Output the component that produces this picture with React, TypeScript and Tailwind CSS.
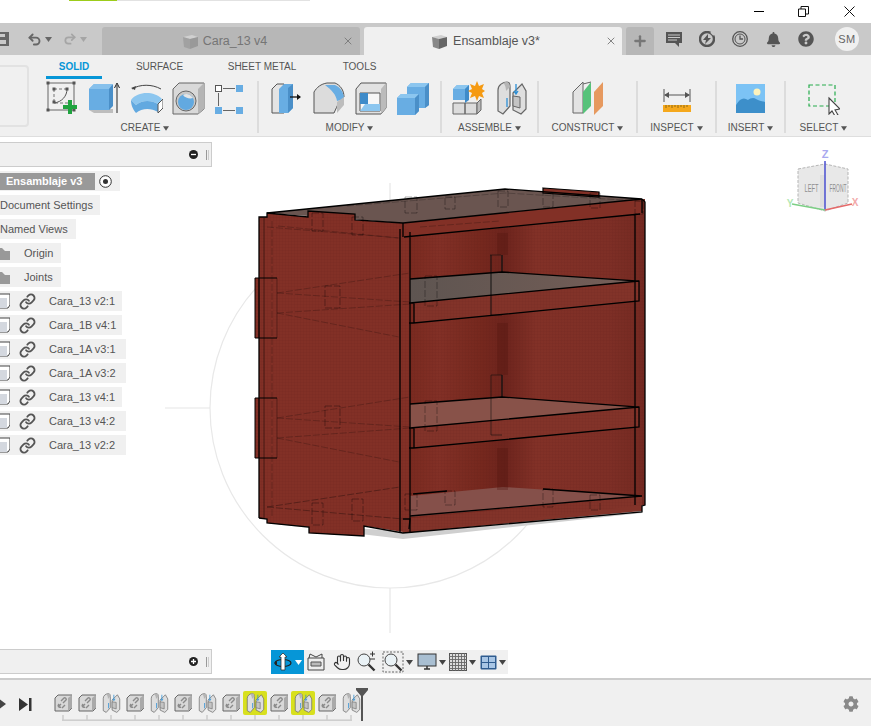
import React from "react";
import { Hand, Link as LinkIcon, Undo2, Redo2, X, Plus } from "lucide-react";
import { FaBell, FaQuestionCircle, FaCog } from "react-icons/fa";

const Tri = ({ c = "#555", w = 7 }: { c?: string; w?: number }) => (
  <svg width={w} height={5} viewBox="0 0 7 5" className="shrink-0"><path d="M0 0h7L3.5 5z" fill={c} /></svg>
);

const CubeDoc = ({ c = "#777" }: { c?: string }) => (
  <svg width="17" height="16" viewBox="0 0 17 16" className="shrink-0">
    <path d="M1 3 10 1l6 2-8 2z" fill="#d0d0d0" />
    <path d="M1 3l7 2v10l-6-2z" fill={c} opacity="0.75" />
    <path d="M8 5l8-2v9l-8 3z" fill={c} />
  </svg>
);

/* ---------- ribbon icons ---------- */
const I = ({ w = 33, children }: { w?: number; children: React.ReactNode }) => (
  <svg width={w} height={34} viewBox={`0 0 ${w} 34`} className="shrink-0">{children}</svg>
);

const SketchIcon = () => (
  <I>
    <path d="M2 2h26v27H2z" fill="none" stroke="#666" strokeWidth="1" />
    <path d="M8 8h14M8 8v14h14" fill="none" stroke="#777" strokeDasharray="3 2" />
    <path d="M8 22C16 21 21 15 21 8" fill="none" stroke="#555" />
    {[[2, 2], [28, 2], [2, 29], [28, 29], [8, 8], [21, 8], [8, 21]].map(([x, y], i) => (
      <rect key={i} x={x - 1.5} y={y - 1.5} width="3" height="3" fill="#555" />
    ))}
    <path d="M22 19h4v5h5v4h-5v5h-4v-5h-5v-4h5z" fill="#1fa33f" />
  </I>
);
const ExtrudeIcon = () => (
  <I>
    <path d="M1 29l5 3h19v-4H1z" fill="#bdbdbd" />
    <path d="M1 8l5-5h18v22l-3 4H1z" fill="#68ade3" />
    <path d="M1 8h20l4-5H6z" fill="#87c1ec" />
    <path d="M21 8l4-5v22l-4 4z" fill="#4a8fc8" />
    <path d="M29 32V4m-2.500 3L29 2l2.500 5" stroke="#222" fill="none" strokeWidth="1" />
  </I>
);
const RevolveIcon = () => (
  <I>
    <path d="M2 8C10 3 22 3 31 8" stroke="#444" fill="none" />
    <path d="M1 7l5-2-1 4z" fill="#444" />
    <path d="M1 19C8 10 24 10 32 18l-4 5C21 19 12 19 6 24z" fill="#8cc6ef" />
    <path d="M1 19c0 4 1 8 5 13 6-5 15-5 22-1V23C21 19 12 19 6 24z" fill="#62a9e0" />
    <path d="M28 23l5-5v9l-5 5z" fill="#fff" stroke="#555" />
  </I>
);
const HoleIcon = () => (
  <I>
    <path d="M1 8l6-6h25v26l-6 5H1z" fill="#d9d9d9" stroke="#666" />
    <path d="M26 8l6-6v26l-6 5z" fill="#b5b5b5" />
    <circle cx="14" cy="20" r="10" fill="#c8c8c8" stroke="#666" />
    <circle cx="14" cy="21" r="8" fill="#62a9e0" />
    <path d="M11 14c3-2 7-1 10 3-3 1-8 0-10-3z" fill="#e5e5e5" />
  </I>
);
const PatternIcon = () => (
  <I w={30}>
    <rect x="1.500" y="4.500" width="6" height="6" fill="#fff" stroke="#555" />
    <rect x="22" y="4" width="7" height="7" fill="#68ade3" />
    <rect x="1" y="26" width="7" height="7" fill="#68ade3" />
    <rect x="22" y="26" width="7" height="7" fill="#68ade3" />
    <path d="M9 7.500h12M9 29.500h12M4.500 12v13" stroke="#666" />
  </I>
);
const PressPullIcon = () => (
  <I w={32}>
    <path d="M1 8l5-5h7v29H1z" fill="#e4e4e4" stroke="#555" />
    <path d="M8 8l5-5h9v24l-5 5H8z" fill="#68ade3" />
    <path d="M17 7l5-4v24l-5 5z" fill="#4a8fc8" />
    <path d="M19 16h10" stroke="#111" strokeWidth="1.300" />
    <path d="M26 13l4 3-4 3z" fill="#111" />
  </I>
);
const FilletIcon = () => (
  <I w={32}>
    <path d="M1 11C4 6 8 3 14 2h8c5 2 9 7 9 14l-5 5c-2 4-3 7-5 11H1z" fill="#dcdcdc" stroke="#555" />
    <path d="M12 4h10c5 2 9 7 9 14l-7 2C23 14 19 9 12 4z" fill="#68ade3" />
    <path d="M24 21l7-5v8l-7 8z" fill="#bdbdbd" />
  </I>
);
const ShellIcon = () => (
  <I w={32}>
    <path d="M1 8l5-6h25v25l-5 6H1z" fill="#e2e2e2" stroke="#555" />
    <path d="M26 8l5-6v25l-5 6z" fill="#bbb" />
    <path d="M5 12h20v18H5z" fill="#f7f7f7" stroke="#555" />
    <path d="M5 12h8v11H5z" fill="#3e8bc9" />
    <path d="M5 30l5-7h15v7z" fill="#8cc6ef" />
  </I>
);
const CombineIcon = () => (
  <I w={32}>
    <path d="M10 6l4-4h18v22l-4 3H10z" fill="#68ade3" />
    <path d="M10 6h18l4-4H14z" fill="#8cc6ef" />
    <path d="M28 6l4-4v22l-4 3z" fill="#4a8fc8" />
    <path d="M0 17l4-4h18v17l-4 4H0z" fill="#68ade3" />
    <path d="M0 17h18l4-4H4z" fill="#8cc6ef" />
    <path d="M18 17l4-4v17l-4 4z" fill="#4a8fc8" />
  </I>
);
const NewComponentIcon = () => (
  <I>
    <path d="M1 22h12v11H1zM13 22h12v11H13z" fill="#dcdcdc" stroke="#666" />
    <path d="M25 22l4-4v11l-4 4z" fill="#bbb" stroke="#666" />
    <path d="M1 8l4-4h12v15H1z" fill="#68ade3" />
    <path d="M1 8h12l4-4H5z" fill="#8cc6ef" />
    <path d="M13 8l4-4v15l-4 3z" fill="#3e8bc9" />
    <path d="M25 0l2 5 5-2-2 5 3 2-3 2 2 5-5-2-2 5-2-5-5 2 2-5-4-2 4-2-2-5 5 2z" fill="#f59a12" />
  </I>
);
const JointIcon = ({ w = 30, h = 34 }: { w?: number; h?: number }) => (
  <svg width={w} height={h} viewBox="0 0 30 34" className="shrink-0">
    <path d="M1 9C1 4 6 1 10 1c2 0 3 2 3 5v19l-7 8-5-3z" fill="#dedede" stroke="#666" strokeWidth="1.200" />
    <path d="M9 1c3 0 4 3 4 5l-4 4C9 7 8 3 6 2z" fill="#b5b5b5" />
    <path d="M16 12l9-9 4 7v18l-5 5-8-4z" fill="#dedede" stroke="#666" strokeWidth="1.200" />
    <path d="M16 15l7 1v11l-7-2z" fill="#c4c4c4" stroke="#666" />
    <path d="M19 3v9m-2-2 2 3 2-3M10 17v9" stroke="#2b8fd6" strokeWidth="1.300" fill="none" />
  </svg>
);
const ConstructIcon = () => (
  <I w={32}>
    <path d="M1 11L11 1v31H1z" fill="#e3e3e3" stroke="#666" />
    <path d="M11 11l8-10v24l-8 8z" fill="#57c27a" />
    <path d="M11 3l8-2" stroke="#666" />
    <path d="M22 11l9-10v24l-9 9z" fill="#e6995f" />
  </I>
);
const InspectIcon = () => (
  <I w={28}>
    <path d="M1 8v13M27 8v13M2 14h24" stroke="#555" fill="none" />
    <path d="M1 14l5-3v6zM27 14l-5-3v6z" fill="#555" />
    <rect y="24" width="28" height="7" fill="#f5a81c" />
    <path d="M3 24v3M6 24v2M9 24v3M12 24v2M15 24v3M18 24v2M21 24v3M24 24v2" stroke="#7a5a10" strokeWidth=".8" />
  </I>
);
const InsertIcon = () => (
  <I w={29}>
    <rect width="29" height="29" y="3" fill="#7cc3f5" />
    <circle cx="21" cy="11" r="3.500" fill="#fdf3bd" />
    <path d="M0 24c4-7 8-8 12-5 2-2 6-3 8-1 3 2 6 2 9 3v11H0z" fill="#3d8fca" />
  </I>
);
const SelectIcon = () => (
  <I w={32}>
    <path d="M1 4h26v21H1z" fill="none" stroke="#26ac4d" strokeWidth="1.200" strokeDasharray="4 2.500" />
    <path d="M21 17l11 11-5 1 3 5-3 1-3-5-3 3z" fill="#fff" stroke="#444" strokeWidth="1.100" />
  </I>
);

/* ---------- ribbon ---------- */
const Group = ({ w, label, gap = "", children, last }: { w: string; label: string; gap?: string; children: React.ReactNode; last?: boolean }) => (
  <div className={`${w} shrink-0 flex flex-col items-center h-[52px] ${last ? "" : "border-r-2 border-[#dcdcdc]"}`}>
    <div className={`flex h-[34px] ${gap}`}>{children}</div>
    <div className="mt-[6px] flex items-center gap-[3px] text-[10px] leading-[14px] text-[#555]">
      {label} <Tri w={6} />
    </div>
  </div>
);

/* ---------- model ---------- */
const B = "#000";
const Dash = ({ d, o = 0.3 }: { d: string; o?: number }) => (
  <path d={d} fill="none" stroke="#000" strokeWidth=".7" strokeDasharray="7 2" opacity={o} />
);
const SIDE = "M259 216h8v-4l41 4v-6l47 3v6l48 3 7 9V532l-46-7v10l-55-3v-6l-42-4v-4l-8-1z";
const Model = () => (
  <svg className="absolute inset-0" width="871" height="542" viewBox="0 136 871 542">
    <defs>
      <pattern id="mesh" width="3" height="3" patternUnits="userSpaceOnUse">
        <path d="M0 0H3M0 0V3" stroke="#3f100a" strokeWidth=".5" opacity=".22" />
      </pattern>
      <linearGradient id="wall" x1="0" x2="1" y1="0" y2="0">
        <stop offset="0" stopColor="#78281e" />
        <stop offset=".15" stopColor="#823026" />
        <stop offset=".32" stopColor="#76281e" />
        <stop offset=".42" stopColor="#6d241d" />
        <stop offset=".55" stopColor="#823127" />
        <stop offset=".85" stopColor="#7e2f26" />
        <stop offset="1" stopColor="#742921" />
      </linearGradient>
      <linearGradient id="sh1" x1="0" x2="1" y1="0" y2="0">
        <stop offset="0" stopColor="#5e5551" />
        <stop offset=".6" stopColor="#6c5a54" />
        <stop offset="1" stopColor="#77605a" />
      </linearGradient>
    </defs>
    {/* work plane */}
    <circle cx="390" cy="407" r="180" fill="none" stroke="#e8e8e8" strokeWidth="1.200" />
    <path d="M165 407h45M390 587v45M390 182v45" stroke="#e6e6e6" strokeWidth="1.200" />
    {/* shadow */}
    <path d="M267 522l136 16 239-26v-8L403 530z" fill="#cfcfcf" />
    {/* walls */}
    <path d="M403 222L645 198V504L403 532z" fill="url(#wall)" />
    <path d="M267 212L505 188L642 198L403 222z" fill="#6a5550" />
    <path d={SIDE} fill="#823026" />
    <path d="M255 277h22v60h-22zM255 397h22v60h-22z" fill="#823026" />
    <path d="M404 222L642 198V213L404 236z" fill="#823026" />
    <path d="M543 187l56 4v5l-56-4z" fill="#823026" stroke={B} strokeWidth="1.200" />
    <path d="M414 302L639 280V300L414 322z" fill="#823329" />
    <path d="M414 427L639 406V426L414 447z" fill="#823329" />
    <path d="M403 532l-1-14 240-23v15z" fill="#823329" />
    {/* mesh */}
    <path d={`M403 236L645 212V504L403 532z${SIDE}M255 277h22v60h-22zM255 397h22v60h-22z`} fill="url(#mesh)" />
    {/* shelves */}
    <path d="M410 278L502 271L639 280L410 302z" fill="url(#sh1)" />
    <path d="M410 403L502 396L639 406L410 427z" fill="#885249" />
    <path d="M410 495L503 486L642 495L410 516z" fill="#85504a" />
    {/* centre slot */}
    <path d="M497 232h11v22h-11zM497 322h11v52h-11zM497 447h11v42h-11z" fill="#4f130c" opacity=".3" />
    <path d="M490 254h11M491 254v60h11M491 374h11M491 374v60h11M491 314v-60" stroke="#111" fill="none" strokeWidth=".7" opacity=".8" />
    <path d="M502 254v17M502 374v22" stroke="#111" strokeWidth="1.300" />
    {/* heavy edges */}
    <g fill="none" stroke={B} strokeWidth="1.300">
      <path d="M259 517V216h8v-4l41 4v-6l47 3v6l48 3" />
      <path d="M642 198l3 3V504L642 505v6L403 532l-39-7v10l-55-3v-6l-42-4v-4l-8-1" />
      <path d="M267 212L505 188L642 198L403 222" />
      <path d="M400 228V532M410 231V531M404 236L640 213M635 213V504" />
      <path d="M403 222v14M642 198v14" />
      <path d="M410 302L639 280M410 278L502 271L639 280V300L414 322V302h-5M414 322h-5" />
      <path d="M410 427L639 406M410 403L502 396L639 406V426L414 447V427h-5M414 447h-5" />
      <path d="M410 515L642 495M413 493L447 490M543 488L642 495" />
      <path d="M403 518h7l-1 10" />
      <path d="M277 277h-22v60h22M277 397h-22v60h22" strokeWidth="1" />
    </g>
    {/* hidden edges */}
    <path d="M264 217V518" stroke="#000" strokeWidth=".8" opacity=".55" />
    <path d="M277 277v60M277 397v60" stroke="#000" strokeWidth=".6" opacity=".5" />
    <Dash d="M272 220V516M278 225l120 12" />
    <Dash d="M277 292l133-20M277 312l133-9M277 312l122 24M277 292l133 9" />
    <Dash d="M277 417l133-21M277 437l133-10M277 437l122 24M277 417l133 9" />
    <Dash d="M325 285h15v22h-15zM325 405h15v22h-15zM425 275h12v30h-12zM425 400h12v30h-12z" o={0.45} />
    <Dash d="M267 506l133-20M267 506l136 12M312 502h11v22h-11zM352 498h11v22h-11zM405 493h12v16h-12zM445 490h10v14h-10zM543 488h10v18h-10zM590 494h10v15h-10z" o={0.45} />
    <Dash d="M312 212h11v18h-11zM352 216h11v18h-11zM405 196h12v16h-12zM445 196h10v12h-10zM498 190h10v16h-10zM543 192h10v14h-10zM590 192h10v15h-10zM635 200h8v13h-8z" o={0.45} />
    <Dash d="M267 226L400 237M347 205L505 192L640 200M420 226l80-6" o={0.3} />
    {/* view cube */}
    <path d="M798 168L825 163L848 168V202L825 210L798 202z" fill="#e8e8e8" stroke="#b5b5b5" strokeDasharray="3 1.500" />
    <rect x="820" y="174" width="5" height="32" fill="#dedede" />
    <text x="811.500" y="191" textAnchor="middle" fontSize="10" fill="#8e8e8e" fontFamily="'Liberation Sans',sans-serif" textLength="14" lengthAdjust="spacingAndGlyphs">LEFT</text>
    <text x="838" y="191" textAnchor="middle" fontSize="10" fill="#8e8e8e" fontFamily="'Liberation Sans',sans-serif" textLength="17" lengthAdjust="spacingAndGlyphs">FRONT</text>
    <path d="M825 160V209" stroke="#4a4fd0" strokeWidth="1.500" />
    <path d="M825 209L792 203" stroke="#7ccf85" strokeWidth="1.500" />
    <path d="M825 209L852 203" stroke="#e56a6a" strokeWidth="1.500" />
    <text x="825" y="157" textAnchor="middle" fontSize="11" fontWeight="bold" fill="#a9a9ef" fontFamily="'Liberation Sans',sans-serif">Z</text>
    <text x="790" y="206" textAnchor="middle" fontSize="10" fontWeight="bold" fill="#b3e8b3" fontFamily="'Liberation Sans',sans-serif">Y</text>
    <text x="855" y="205" textAnchor="middle" fontSize="10" fontWeight="bold" fill="#f2aaaa" fontFamily="'Liberation Sans',sans-serif">X</text>
  </svg>
);

/* ---------- browser tree ---------- */
const Row = ({ w, children }: { w: string; children: React.ReactNode }) => (
  <div className={`${w} h-5 flex items-center bg-[#f0f0f0] text-[11px] text-[#555] whitespace-nowrap overflow-hidden`}>{children}</div>
);
const Folder = () => (
  <svg width="10" height="14" viewBox="0 0 10 14" className="shrink-0"><path d="M-4 2h6l3 3h5v9H-4z" fill="#999" /></svg>
);
const Comp = ({ name, w }: { name: string; w: string }) => (
  <Row w={w}>
    <svg width="10" height="16" viewBox="0 0 10 16" className="shrink-0">
      <path d="M-3 1h13v11l-2 3H-3z" fill="#fff" stroke="#444" />
      <path d="M-3 5h10v10H-3z" fill="#d4d8df" />
    </svg>
    <LinkIcon size={17} strokeWidth={2.600} color="#555" className="ml-[9px] shrink-0" />
    <span className="ml-[13px]">{name}</span>
  </Row>
);
const Grip = () => (
  <div className="flex gap-px ml-[8px]"><div className="w-px h-[10px] bg-[#999]" /><div className="w-px h-[10px] bg-[#ccc]" /></div>
);
const PanelBar = ({ plus }: { plus?: boolean }) => (
  <div className="w-[212px] h-[25px] bg-[#f0f0f0] border border-l-0 border-[#ccc] flex items-center justify-end pr-[2px]">
    <svg width="9" height="9" viewBox="0 0 9 9" className="shrink-0">
      <circle cx="4.500" cy="4.500" r="4.500" fill="#222" />
      <path d={plus ? "M2 4.500h5M4.500 2v5" : "M2 4.500h5"} stroke="#fff" strokeWidth="1.300" />
    </svg>
    <Grip />
  </div>
);

/* ---------- nav ---------- */
const Orbit = () => (
  <svg width="20" height="20" viewBox="0 0 20 20" className="shrink-0">
    <ellipse cx="10" cy="11" rx="8" ry="3.500" fill="none" stroke="#222" strokeWidth="1.200" />
    <path d="M1 11l3-2v4z" fill="#222" />
    <path d="M8 18V5H6l4-4 4 4h-2v13z" fill="#fff" stroke="#333" strokeWidth=".8" />
  </svg>
);
const LookAt = () => (
  <svg width="20" height="20" viewBox="0 0 20 20" className="shrink-0">
    <path d="M2 6h16v12H2z" fill="#eee" stroke="#444" />
    <path d="M5 10h10v4H5z" fill="#bbb" stroke="#555" />
    <path d="M3 6l1-4 6 3 6-3v4" fill="none" stroke="#444" />
  </svg>
);
const Magnify = ({ dashed, pm }: { dashed?: boolean; pm?: boolean }) => (
  <svg width="22" height="22" viewBox="0 0 22 22" className="shrink-0">
    {dashed && <rect x="1" y="1" width="20" height="20" fill="none" stroke="#666" strokeDasharray="2 1.500" />}
    <circle cx="9" cy="9" r="6" fill="#eaf2f6" stroke="#444" />
    <path d="M13.500 13.500l6 6" stroke="#333" strokeWidth="2.400" />
    {pm && <path d="M15 3h5M17.500 .5v5M15 8h5" stroke="#333" strokeWidth="1" />}
  </svg>
);
const Display = () => (
  <svg width="20" height="20" viewBox="0 0 20 20" className="shrink-0">
    <rect x="1" y="2" width="18" height="12" fill="#a9bfd2" stroke="#333" />
    <path d="M7 17h6M10 14v3" stroke="#333" strokeWidth="1.500" />
  </svg>
);
const Grid = () => (
  <svg width="18" height="18" viewBox="0 0 18 18" className="shrink-0">
    <rect x=".5" y=".5" width="17" height="17" fill="#ddd" stroke="#555" />
    <path d="M3.500 0v18M6.500 0v18M9.500 0v18M12.500 0v18M15.500 0v18M0 3.500h18M0 6.500h18M0 9.500h18M0 12.500h18M0 15.500h18" stroke="#666" strokeWidth=".9" />
  </svg>
);
const Views = () => (
  <svg width="17" height="15" viewBox="0 0 17 15" className="shrink-0">
    <rect x=".5" y=".5" width="16" height="14" rx="1" fill="#2f5c8f" />
    <path d="M2 2h6v5H2zM9 2h6v5H9zM2 8h6v5H2zM9 8h6v5H9z" fill="#a9c6e5" />
  </svg>
);

/* ---------- timeline ---------- */
const LinkFeature = () => (
  <svg width="18" height="18" viewBox="0 0 18 18">
    <path d="M1 4l3-3h14v13l-3 3H1z" fill="#d8d8d8" stroke="#666" />
    <path d="M14 4l4-3v13l-4 3z" fill="#aaa" />
    <path d="M4 13l3-3M7 7l3-3c1-1 3 1 2 2l-3 3M8 14l3-3M5 10c-2 2 0 4 2 3" fill="none" stroke="#8a8a8a" strokeWidth="1.400" />
  </svg>
);
const features = ["l", "l", "j", "l", "j", "l", "j", "l", "h", "l", "h", "l", "j"];
const tlBg: Record<string, string> = { h: "bg-[#d8e01e] rounded-[2px]" };
const Feature = ({ t, i }: { t: string; i: number }) => (
  <div className="w-6 shrink-0 flex flex-col items-center">
    <div className={`w-6 h-6 flex items-center justify-center ${tlBg[t] || ""}`}>
      {t === "l" ? <LinkFeature /> : <JointIcon w={19} h={20} />}
    </div>
    <svg width="24" height="6" viewBox="0 0 24 6" className="block">
      <path d="M12 0v5" stroke="#ccc" strokeWidth="1.500" />
      <path d={i === 0 ? "M11 5.200h13" : i === features.length - 1 ? "M0 5.200h13" : "M0 5.200h24"} stroke="#ccc" strokeWidth="1.500" />
    </svg>
  </div>
);

export default function App() {
  return (
    <div className="w-[871px] h-[726px] overflow-hidden bg-white flex flex-col font-['Liberation_Sans',Arial,sans-serif]">
      {/* window title bar */}
      <div className="h-[23px] shrink-0 relative flex justify-end items-center pr-[16px] gap-[30px]">
        <div className="absolute left-[69px] top-0 h-px w-[241px] bg-[#e2e2e2]"><div className="w-[48px] h-px bg-[#9ccc1a]" /></div>
        <div className="w-[10px] h-px bg-black" />
        <svg width="11" height="11" viewBox="0 0 11 11" className="mx-[4px]"><path d="M.5 3h7v7.500h-7zM3 3V.5h7.500V8H8" fill="none" stroke="#111" /></svg>
        <svg width="11" height="11" viewBox="0 0 11 11" className="ml-[1px]"><path d="M.5.500l10 10M10.500.500l-10 10" stroke="#111" /></svg>
      </div>

      {/* tab bar */}
      <div className="h-[32px] shrink-0 bg-[#c9c9c9] flex items-end relative">
        <div className="h-full w-[102px] shrink-0 flex items-center">
          <svg width="9" height="14" viewBox="0 0 9 14" className="shrink-0 mb-[1px]"><path d="M-4 0h13v14H-4z" fill="#666" /><path d="M-2 8h8v4h-8zM-2 2h7v3h-7z" fill="#c9c9c9" /></svg>
          <Undo2 size={15} color="#666" strokeWidth={3} className="ml-[18px]" />
          <span className="ml-[3px]"><Tri c="#666" /></span>
          <Redo2 size={14} color="#a5a5a5" strokeWidth={3} className="ml-[11px]" />
          <span className="ml-[3px]"><Tri c="#a5a5a5" /></span>
        </div>
        <div className="w-[258px] h-[28px] bg-[#b7b7b7] rounded-t-[3px] flex items-center justify-center relative text-[12.500px] text-[#757575]">
          <div className="flex items-center gap-[4px] mr-[13px] mt-[1px]"><CubeDoc c="#999" /><span>Cara_13 v4</span></div>
          <X size={12} strokeWidth={1.800} color="#777" className="absolute right-[6px] top-[8px]" />
        </div>
        <div className="w-[258px] h-[28px] ml-[4px] bg-[#f0f0f0] rounded-t-[3px] flex items-center justify-center relative text-[12.500px] text-[#555]">
          <div className="flex items-center gap-[5px] mr-[15px] mt-[1px]"><CubeDoc c="#666" /><span>Ensamblaje v3*</span></div>
          <X size={12} strokeWidth={1.800} color="#777" className="absolute right-[5px] top-[8px]" />
        </div>
        <div className="w-[28px] h-[28px] ml-[4px] bg-[#b7b7b7] rounded-t-[3px] flex items-center justify-center">
          <Plus size={16} strokeWidth={3.500} color="#777" />
        </div>
        <div className="h-full flex items-center ml-[12px]">
          <svg width="16" height="15" viewBox="0 0 16 15" className="shrink-0"><path d="M0 0h16v11h-3v4l-4-4H0z" fill="#555" /><path d="M2 3h12M2 5.500h12M2 8h9" stroke="#c9c9c9" /></svg>
          <svg width="16" height="16" viewBox="0 0 16 16" className="ml-[17px] shrink-0"><circle cx="8" cy="8" r="7" fill="none" stroke="#555" strokeWidth="2.400" /><path d="M9 3L4 9h3l-1 4 6-6H9z" fill="#555" /><path d="M12 1l3 3" stroke="#c9c9c9" strokeWidth="2" /></svg>
          <svg width="16" height="16" viewBox="0 0 16 16" className="ml-[17px] shrink-0"><circle cx="8" cy="8" r="7.300" fill="none" stroke="#555" strokeWidth="1.300" /><circle cx="8" cy="8" r="5" fill="none" stroke="#555" strokeWidth="1" /><path d="M8 4.500V8h3" fill="none" stroke="#555" strokeWidth="1.300" /></svg>
          <FaBell size={15} color="#555" className="ml-[18px] shrink-0" />
          <FaQuestionCircle size={16} color="#555" className="ml-[17px] shrink-0" />
          <div className="ml-[21px] w-[24px] h-[24px] rounded-full bg-[#f0f0f0] flex items-center justify-center text-[11px] tracking-[.6px] text-[#666]">SM</div>
        </div>
      </div>

      {/* ribbon */}
      <div className="h-[82px] shrink-0 bg-[#f0f0f0] border-b border-[#dedede] flex">
        <div className="w-[37px] h-[62px] -ml-[8px] mt-[10px] mr-[4px] shrink-0 rounded-[4px] border-2 border-[#e2e2e2]" />
        <div className="flex flex-col">
          <div className="h-[26px] flex pl-[13px] text-[10px] text-[#555]">
            <div className="w-[56px] h-[24px] flex items-center justify-center border-b-[3px] border-[#0696d7] text-[#0696d7] font-bold pt-[1px]">SOLID</div>
            <div className="w-[115px] h-[22px] flex items-center justify-center">SURFACE</div>
            <div className="w-[90px] h-[22px] flex items-center justify-center">SHEET METAL</div>
            <div className="w-[105px] h-[22px] flex items-center justify-center">TOOLS</div>
          </div>
          <div className="flex">
            <Group w="w-[226px]" label="CREATE" gap="gap-[9px]"><SketchIcon /><ExtrudeIcon /><RevolveIcon /><HoleIcon /><PatternIcon /></Group>
            <Group w="w-[183px]" label="MODIFY" gap="gap-[10px]"><PressPullIcon /><FilletIcon /><ShellIcon /><CombineIcon /></Group>
            <Group w="w-[97px]" label="ASSEMBLE" gap="gap-[12px]"><NewComponentIcon /><JointIcon /></Group>
            <Group w="w-[99px]" label="CONSTRUCT"><ConstructIcon /></Group>
            <Group w="w-[79px]" label="INSPECT"><InspectIcon /></Group>
            <Group w="w-[69px]" label="INSERT"><InsertIcon /></Group>
            <Group w="w-[75px]" label="SELECT" last><SelectIcon /></Group>
          </div>
        </div>
      </div>

      {/* canvas */}
      <div className="flex-1 relative">
        <Model />

        <div className="absolute left-0 top-[5px] flex flex-col gap-1">
          <PanelBar />
          <Row w="w-[120px]">
            <div className="w-[95px] h-[17px] bg-[#999] text-white font-bold text-[11px] leading-[17px] pl-[6px]">Ensamblaje v3</div>
            <svg width="13" height="13" viewBox="0 0 13 13" className="ml-[4px] shrink-0"><circle cx="6.500" cy="6.500" r="5.800" fill="#fff" stroke="#333" /><circle cx="6.500" cy="6.500" r="2.500" fill="#333" /></svg>
          </Row>
          <Row w="w-[100px]"><span>Document Settings</span></Row>
          <Row w="w-[76px]"><span>Named Views</span></Row>
          <Row w="w-[61px]"><Folder /><span className="ml-[14px]">Origin</span></Row>
          <Row w="w-[61px]"><Folder /><span className="ml-[14px]">Joints</span></Row>
          <Comp name="Cara_13 v2:1" w="w-[122px]" />
          <Comp name="Cara_1B v4:1" w="w-[122px]" />
          <Comp name="Cara_1A v3:1" w="w-[126px]" />
          <Comp name="Cara_1A v3:2" w="w-[126px]" />
          <Comp name="Cara_13 v4:1" w="w-[122px]" />
          <Comp name="Cara_13 v4:2" w="w-[126px]" />
          <Comp name="Cara_13 v2:2" w="w-[126px]" />
        </div>

        <div className="absolute left-0 bottom-[4px]"><PanelBar plus /></div>

        <div className="absolute left-[271px] bottom-[4px] h-[24px] w-[237px] bg-[#f0f0f0] flex items-center">
          <div className="w-[33px] h-full bg-[#0696d7] flex items-center pl-[2px] gap-[2px] shrink-0"><Orbit /><Tri c="#fff" /></div>
          <div className="ml-[2px]"><LookAt /></div>
          <Hand size={18} strokeWidth={1.500} color="#333" className="ml-[7px] shrink-0" />
          <div className="ml-[4px]"><Magnify pm /></div>
          <div className="ml-[5px]"><Magnify dashed /></div>
          <div className="ml-[2px]"><Tri c="#444" /></div>
          <div className="ml-[4px]"><Display /></div>
          <div className="ml-[2px]"><Tri c="#444" /></div>
          <div className="ml-[3px]"><Grid /></div>
          <div className="ml-[2px]"><Tri c="#444" /></div>
          <div className="ml-[4px]"><Views /></div>
          <div className="ml-[2px]"><Tri c="#444" /></div>
        </div>
      </div>

      {/* timeline */}
      <div className="h-[48px] shrink-0 bg-[#f0f0f0] border-t-2 border-[#cccccc] flex items-start relative">
        <svg width="6" height="12" viewBox="0 0 6 12" className="mt-[18px] shrink-0"><path d="M-2 0l8 6-8 6z" fill="#444" /></svg>
        <svg width="13" height="13" viewBox="0 0 13 13" className="mt-[18px] ml-[13px] shrink-0"><path d="M0 0l9 6.500L0 13zM10 0h2.500v13H10z" fill="#333" /></svg>
        <div className="flex ml-[19px] mt-[11px]">
          {features.map((t, i) => <Feature key={i} t={t} i={i} />)}
        </div>
        <svg width="14" height="33" viewBox="0 0 14 33" className="absolute left-[355px] top-[8px]"><path d="M1 0h12v2l-5 6v25H6V8L1 2z" fill="#555" /></svg>
        <FaCog size={16} color="#8a8a8a" className="absolute right-[12px] top-[16px]" />
      </div>
    </div>
  );
}
